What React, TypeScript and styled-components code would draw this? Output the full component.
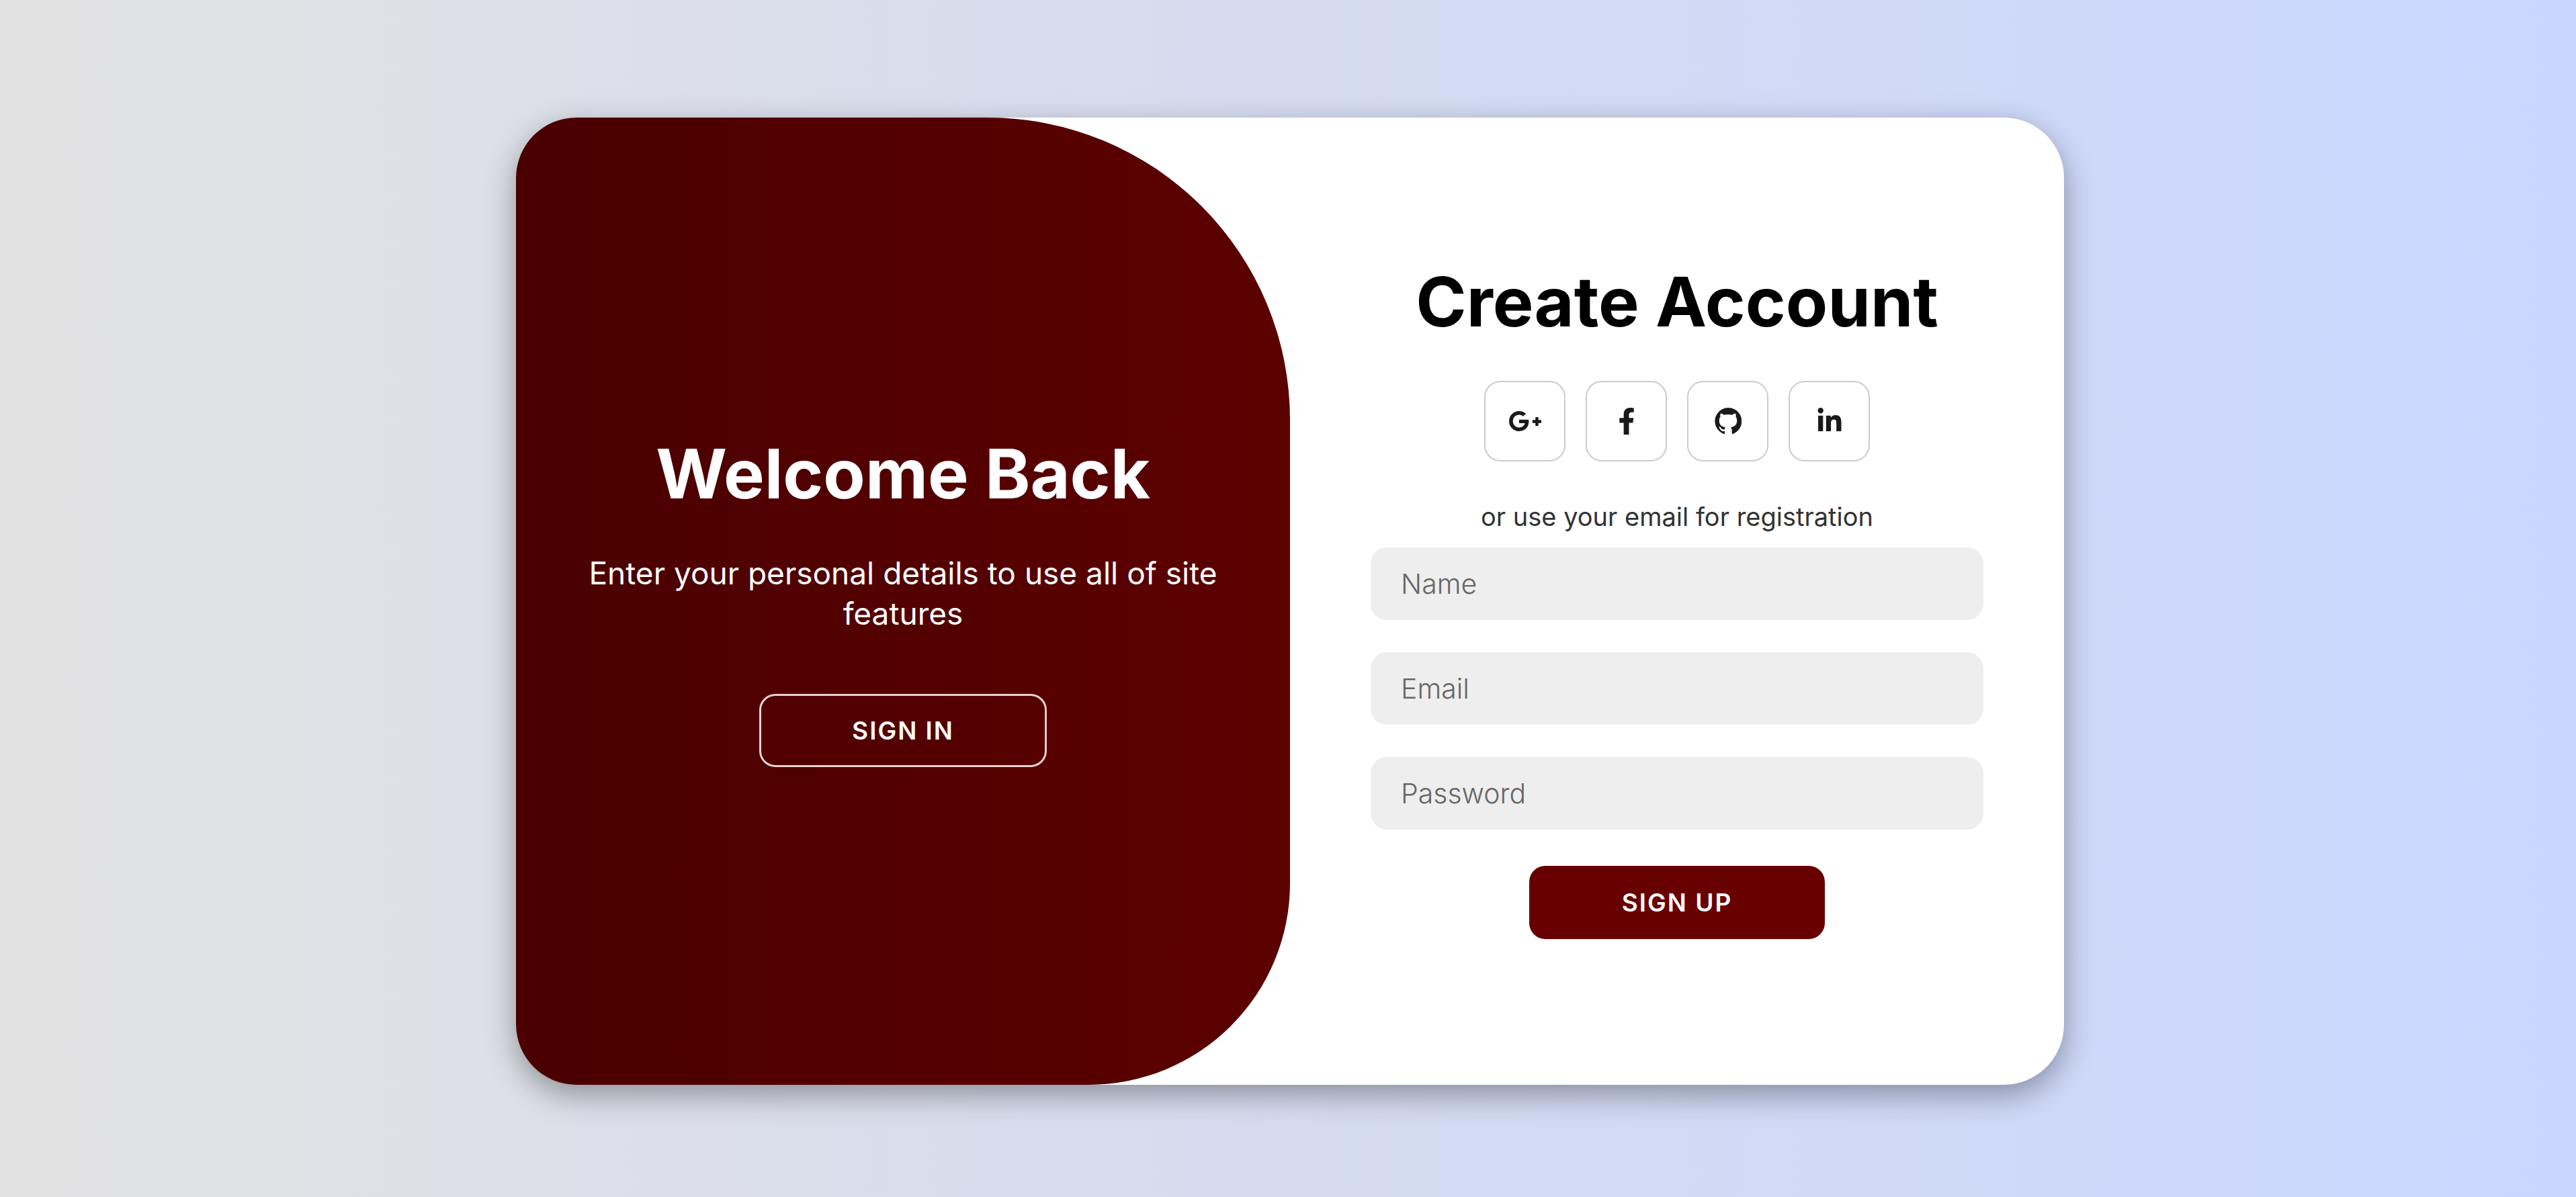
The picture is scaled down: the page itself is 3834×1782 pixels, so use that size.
import React from "react";
import styled, { createGlobalStyle } from "styled-components";
import { FaFacebookF, FaGooglePlusG, FaLinkedinIn } from "react-icons/fa";

const GlobalStyle = createGlobalStyle`
  *, *::before, *::after {
    box-sizing: border-box;
    margin: 0;
    padding: 0;
  }

  body {
    background: #c9d6ff;
    font-family: Inter, "Open Sans", "Liberation Sans", sans-serif;
  }
`;

const Page = styled.main`
  display: flex;
  align-items: center;
  justify-content: center;
  min-height: 100vh;
  padding: 8px 0 0 6px;
  background: linear-gradient(to right, #e2e2e2, #c9d6ff);
`;

const Card = styled.div`
  display: grid;
  grid-template-columns: 1fr 1fr;
  width: 100%;
  max-width: 2304px;
  min-height: 1440px;
  border-radius: 90px;
  background: #fff;
  box-shadow: 0 15px 45px rgba(0, 0, 0, 0.35);
  overflow: hidden;
`;

const WelcomePanel = styled.section`
  display: flex;
  flex-direction: column;
  align-items: center;
  justify-content: center;
  padding: 0 90px;
  border-radius: 0 450px 300px 0;
  background: linear-gradient(to right, #4a0000, #5c0000);
  color: #fff;
  text-align: center;
`;

const Title = styled.h1`
  font-size: 102px;
  font-weight: 700;
  line-height: 115px;
`;

const Lead = styled.p`
  margin: 60px 0 90px;
  font-size: 46px;
  line-height: 60px;
`;

const Button = styled.button<{ $outlined?: boolean }>`
  min-width: ${(p) => (p.$outlined ? 428 : 440)}px;
  height: 109px;
  border: ${(p) => (p.$outlined ? "3px solid #e8cfcf" : "none")};
  border-radius: 24px;
  background: ${(p) => (p.$outlined ? "transparent" : "#690000")};
  color: #fff;
  font-family: inherit;
  font-size: 37px;
  font-weight: 600;
  letter-spacing: 2px;
  text-transform: uppercase;
  cursor: pointer;
`;

const Form = styled.form`
  display: flex;
  flex-direction: column;
  align-items: center;
  justify-content: center;
  padding: 0 120px;
`;

const SocialRow = styled.nav`
  display: flex;
  gap: 30px;
  margin: 60px 0;
`;

const SocialLink = styled.a`
  display: flex;
  align-items: center;
  justify-content: center;
  width: 121px;
  height: 120px;
  border: 2px solid #ccc;
  border-radius: 24px;
  color: #1a1a1a;
`;

const Hint = styled.p`
  margin-bottom: 24px;
  color: #333;
  font-size: 38px;
  line-height: 44px;
`;

const Fields = styled.div`
  display: grid;
  gap: 48px;
  width: 100%;
  margin-bottom: 54px;
`;

const Field = styled.input`
  width: 100%;
  height: 108px;
  padding: 0 45px;
  border: none;
  border-radius: 24px;
  outline: none;
  background: #eee;
  color: #333;
  font-family: inherit;
  font-size: 41px;

  &::placeholder {
    color: #666;
    font-weight: 300;
    opacity: 1;
  }
`;

function GithubIcon({ size }: { size: number }) {
  return (
    <svg width={size} height={size} viewBox="0 0 112 112" fill="currentColor" aria-hidden="true">
      <path d="M42 110A56 56 0 1 1 72 110V94C72 88 70 84 67 81C83 79 93 72 93 53C93 46 91 41 88 37C89 33 89 28 87 24C82 24 77 27 73 30C62 27 50 27 39 30C35 27 30 24 25 24C23 28 23 33 24 37C21 41 19 46 19 53C19 72 29 79 45 81C43 84 42 87 41 90C32 93 28 87 25 82C22 78 16 78 18 81C23 85 22 100 42 98Z" />
    </svg>
  );
}

const socials = [
  { label: "Google Plus", Icon: FaGooglePlusG, size: 50 },
  { label: "Facebook", Icon: FaFacebookF, size: 40 },
  { label: "GitHub", Icon: GithubIcon, size: 40 },
  { label: "LinkedIn", Icon: FaLinkedinIn, size: 40 },
];

const fields = [
  { name: "name", type: "text", label: "Name" },
  { name: "email", type: "email", label: "Email" },
  { name: "password", type: "password", label: "Password" },
];

export default function App() {
  return (
    <>
      <GlobalStyle />
      <Page>
        <Card>
          <WelcomePanel>
            <Title>Welcome Back</Title>
            <Lead>Enter your personal details to use all of site features</Lead>
            <Button type="button" $outlined>
              Sign In
            </Button>
          </WelcomePanel>
          <Form onSubmit={(e) => e.preventDefault()}>
            <Title>Create Account</Title>
            <SocialRow>
              {socials.map(({ label, Icon, size }) => (
                <SocialLink key={label} href="#" aria-label={label}>
                  <Icon size={size} />
                </SocialLink>
              ))}
            </SocialRow>
            <Hint>or use your email for registration</Hint>
            <Fields>
              {fields.map((f) => (
                <Field
                  key={f.name}
                  name={f.name}
                  type={f.type}
                  placeholder={f.label}
                  aria-label={f.label}
                />
              ))}
            </Fields>
            <Button type="submit">Sign Up</Button>
          </Form>
        </Card>
      </Page>
    </>
  );
}
